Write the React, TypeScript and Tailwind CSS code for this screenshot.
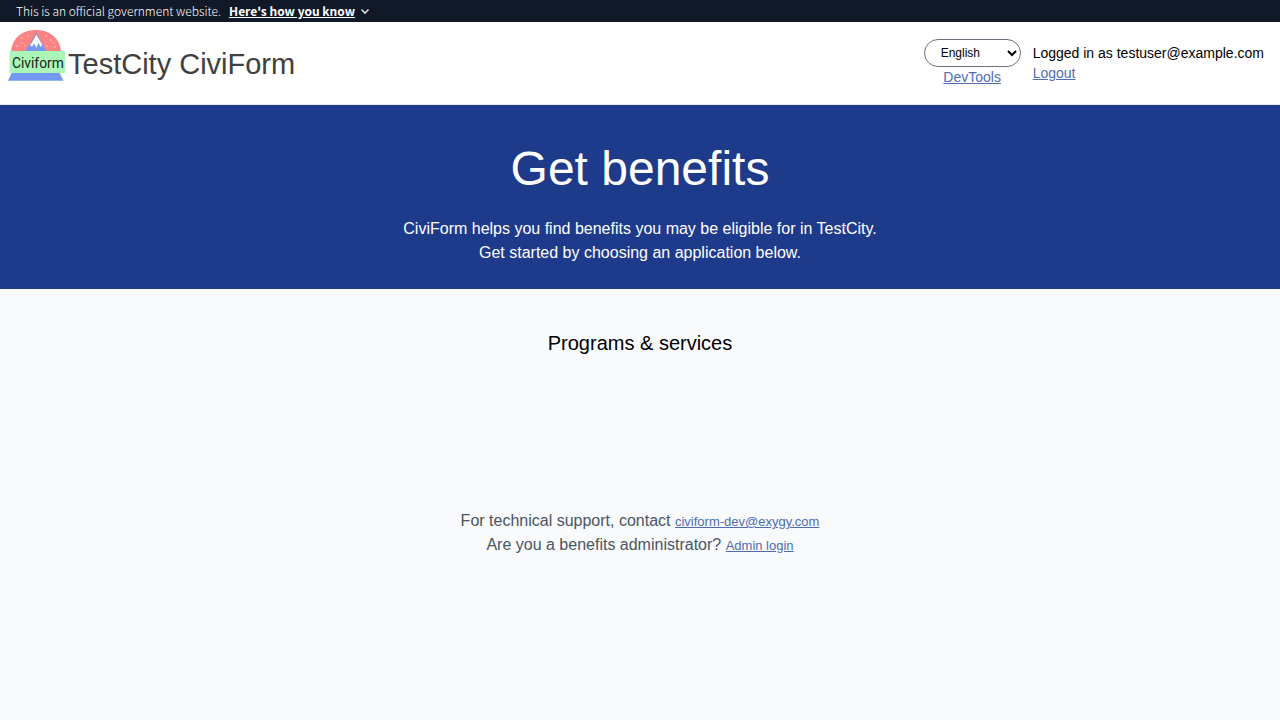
function CiviformLogo() {
  return (
    <svg viewBox="0 0 60 56" className="h-14 w-15 shrink-0" role="img" aria-label="Civiform">
      <path d="M3 23C4.500 9 15 2 28 2S51.500 9 53 23Z" fill="#fb8383" />
      <path d="M17.500 23 28.500 4.500 38.500 23Z" fill="#7599f2" />
      <path d="M22 17 28.500 6l6 10.500-2 2.500-2-4.300-2 5-2.500-4-2 3Z" fill="#f7f9fa" />
      <path d="M22 17 28.500 6l6 10.500" fill="none" stroke="#a87c86" strokeWidth=".6" />
      <g fill="#ffd3d0">
        <circle cx="14" cy="10" r=".8" />
        <circle cx="20" cy="8" r=".7" />
        <circle cx="14" cy="15" r=".7" />
        <circle cx="9" cy="18" r=".8" />
        <circle cx="17" cy="17.500" r=".7" />
        <circle cx="38" cy="8" r=".8" />
        <circle cx="43" cy="12" r=".8" />
        <circle cx="39" cy="18" r=".8" />
        <circle cx="45.500" cy="15" r=".8" />
        <circle cx="47" cy="19" r=".7" />
      </g>
      <path d="M4 44h47l4.500 8.700H0Z" fill="#7599f2" />
      <path d="M1.500 23H57v22H1.500Z" fill="#aaf5b8" />
      <text x="4" y="39.500" fontSize="13.800" fill="#17251a" className="font-['Roboto',sans-serif]">
        Civiform
      </text>
    </svg>
  );
}

export default function App() {
  return (
    <div className="flex min-h-screen flex-col bg-[#f8fafc] font-['Liberation_Sans',sans-serif] text-black">
      <div className="flex h-[22px] items-center gap-2 bg-[#111827] px-4 font-['Noto_Sans_CJK_SC',sans-serif] text-xs text-white">
        <p className="font-light">This is an official government website.</p>
        <button type="button" className="flex items-center gap-1">
          <span className="font-bold underline">Here's how you know</span>
          <svg viewBox="0 0 12 12" className="size-3" fill="none" stroke="#d9dce1" strokeWidth="1.600" aria-hidden="true">
            <path d="m2.500 4.500 3.500 3.500 3.500-3.500" />
          </svg>
        </button>
      </div>

      <header className="flex items-start justify-between border-b border-gray-200 bg-white pr-4 pb-[17px] pl-2">
        <a href="#home" className="flex items-start pt-[6px]">
          <CiviformLogo />
          <span className="pt-4 text-[29px] leading-10 text-[#404040]">TestCity CiviForm</span>
        </a>
        <div className="flex gap-3 pt-[17px]">
          <div className="flex flex-col items-center">
            <select
              aria-label="Language"
              className="h-7 w-[97px] rounded-full border border-[#6b7280] bg-white px-3 pr-0 text-xs"
            >
              <option>English</option>
            </select>
            <a href="#devtools" className="text-sm text-[#4f6cb3] underline">
              DevTools
            </a>
          </div>
          <div className="flex flex-col items-start pt-1 text-sm">
            <p>Logged in as testuser@example.com</p>
            <a href="#logout" className="text-[#4f6cb3] underline">
              Logout
            </a>
          </div>
        </div>
      </header>

      <main className="text-center">
        <section className="bg-[#1e3a8a] px-4 pt-10 pb-6 text-white">
          <h1 className="mb-6 text-5xl">Get benefits</h1>
          <p>CiviForm helps you find benefits you may be eligible for in TestCity.</p>
          <p>Get started by choosing an application below.</p>
        </section>
        <h2 className="pt-10 text-xl">Programs &amp; services</h2>
      </main>

      <footer className="mt-38 px-4 pb-8 text-center text-[#4b5563]">
        <p>
          For technical support, contact{" "}
          <a href="mailto:civiform-dev@exygy.com" className="text-[13px] text-[#4f6cb3] underline">
            civiform-dev@exygy.com
          </a>
        </p>
        <p>
          Are you a benefits administrator?{" "}
          <a href="#admin" className="text-[13px] text-[#4f6cb3] underline">
            Admin login
          </a>
        </p>
      </footer>
    </div>
  );
}
